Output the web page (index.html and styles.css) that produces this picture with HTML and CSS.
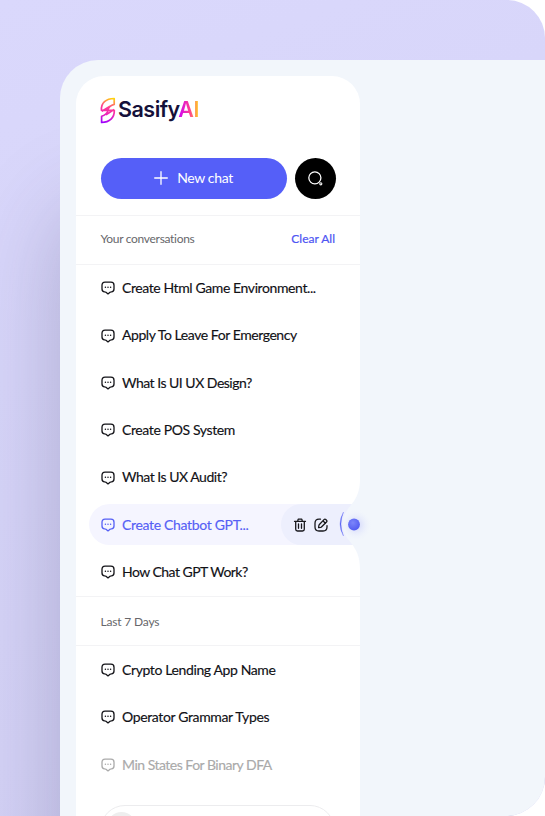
FILE: index.html
```html
<!DOCTYPE html>
<html lang="en">
<head>
<meta charset="utf-8">
<title>SasifyAI</title>
<link rel="stylesheet" href="styles.css">
</head>
<body>
<svg class="defs" width="0" height="0" aria-hidden="true">
  <symbol id="chat" viewBox="0 0 14 14">
    <path d="M4 1.200h6Q13 1.200 13 4.200v3.700q0 2.700-2.600 2.900-.8 0-1.400.5L7 12.900l-2-1.600q-.6-.5-1.400-.5Q1 10.600 1 7.900V4.200Q1 1.200 4 1.200Z" fill="none" stroke="currentColor" stroke-width="1.300" stroke-linejoin="round"/>
    <path d="M4.400 6.300h.01M7 6.300h.01M9.600 6.300h.01" stroke="currentColor" stroke-width="1.500" stroke-linecap="round"/>
  </symbol>
</svg>
<div class="stage">
  <main class="panel">
    <aside class="sidebar">
      <header class="brand">
        <svg class="mark" viewBox="0 0 16 27" fill="none">
          <defs><linearGradient id="g" x1="11" y1="0" x2="4" y2="26" gradientUnits="userSpaceOnUse"><stop offset="0" stop-color="#ffe000"/><stop offset=".4" stop-color="#ff3a94"/><stop offset=".65" stop-color="#ef25b6"/><stop offset="1" stop-color="#9b00ff"/></linearGradient></defs>
          <path d="M14.200 1.500V7.400C9.500 8.500 8.500 10.500 7.500 13.300H1.500C.8 6 6 1.500 14.200 1.500ZM1.600 25.500V19.300C6 18.200 7.200 16.200 8.300 13.300H14.300C14.600 20.800 9.500 25.500 1.600 25.500ZM1.800 14.300 10 9.200M6 17.900 14 12.500" stroke="url(#g)" stroke-width="1.700" stroke-linejoin="round"/>
        </svg>
        <span class="name">Sasify<span class="ai">AI</span></span>
      </header>
      <div class="actions">
        <button class="new"><svg viewBox="0 0 14 14"><path d="M7 .7v12.600M.7 7h12.600" stroke="#fff" stroke-width="1.300" stroke-linecap="round"/></svg><span>New chat</span></button>
        <button class="search" aria-label="Search"><svg viewBox="0 0 16 16" fill="none"><circle cx="7.400" cy="7.400" r="5.700" stroke="#fff" stroke-width="1.200"/><circle cx="13" cy="13" r="1" stroke="#fff" stroke-width="1"/></svg></button>
      </div>
      <div class="heading"><span class="l1">Your conversations</span><a class="clear">Clear All</a></div>
      <ul class="list">
        <li><svg><use href="#chat"/></svg><span class="t1">Create Html Game Environment...</span></li>
        <li><svg><use href="#chat"/></svg><span class="t2">Apply To Leave For Emergency</span></li>
        <li><svg><use href="#chat"/></svg><span class="t3">What Is UI UX Design?</span></li>
        <li><svg><use href="#chat"/></svg><span class="t4">Create POS System</span></li>
        <li><svg><use href="#chat"/></svg><span class="t5">What Is UX Audit?</span></li>
        <li class="active"><svg><use href="#chat"/></svg><span class="t6">Create Chatbot GPT...</span>
          <div class="tools">
            <svg viewBox="0 0 14 14" fill="none" stroke="#17171c" stroke-width="1.300" stroke-linecap="round" stroke-linejoin="round"><path d="M1.500 3.300h11M4.700 3.100l.5-1.900h3.600l.5 1.900M2.700 3.500v7.700q0 1.800 1.800 1.800h5q1.800 0 1.800-1.800V3.500M5.500 6v4.300M8.500 6v4.300"/></svg>
            <svg viewBox="0 0 14 14" fill="none" stroke="#17171c" stroke-width="1.300" stroke-linecap="round" stroke-linejoin="round"><path d="M6.500 1.200H5Q1 1.200 1 5.200V9q0 4 4 4h4q4 0 4-4V7.600M10 1.600q.9-.9 1.900 0l.6.6q.9.900 0 1.800L7.700 8.800q-.4.400-1 .5l-2.100.3.300-2.100q.1-.600.500-1ZM8.900 2.700l2.500 2.500"/></svg>
          </div>
          <svg class="notch" viewBox="0 0 50 100" fill="none">
            <defs><radialGradient id="ball" cx=".4" cy=".35" r=".7"><stop stop-color="#7c85fa"/><stop offset="1" stop-color="#505af0"/></radialGradient><radialGradient id="glow"><stop offset=".3" stop-color="#dfe3fb"/><stop offset="1" stop-color="#f2f6fc" stop-opacity="0"/></radialGradient></defs>
            <path d="M30 5C30 32 13 31 13 50S30 68 30 95Z" fill="#f2f6fc"/>
            <circle cx="26" cy="51" r="16" fill="url(#glow)"/>
            <path d="M13.500 38Q6.500 50 13.500 62Q8.500 50 13.500 38Z" fill="#5964f4" stroke="#5964f4" stroke-width=".3"/>
            <circle cx="24" cy="50.500" r="5.900" fill="url(#ball)"/>
          </svg>
        </li>
        <li><svg><use href="#chat"/></svg><span class="t7">How Chat GPT Work?</span></li>
      </ul>
      <div class="heading second"><span class="l2">Last 7 Days</span></div>
      <ul class="list">
        <li><svg><use href="#chat"/></svg><span class="t8">Crypto Lending App Name</span></li>
        <li><svg><use href="#chat"/></svg><span class="t9">Operator Grammar Types</span></li>
        <li class="faded"><svg><use href="#chat"/></svg><span class="t10">Min States For Binary DFA</span></li>
      </ul>
      <div class="profile"><i></i></div>
    </aside>
  </main>
</div>
</body>
</html>
```
FILE: styles.css
```css
* { box-sizing: border-box; }
html, body { margin: 0; height: 816px; overflow: hidden; background: #fff; }
body { font-family: Lato, "Liberation Sans", sans-serif; color: #111116; }
.defs { display: block; height: 0; width: 0; }
.stage { width: 545px; height: 816px; padding: 60px 0 0 60px; overflow: hidden; border-radius: 0 38px 39px 0; background: linear-gradient(160deg, #dad8fc, #d2d0f4); }
.panel { height: 756px; padding: 16px 0 0 16px; border-radius: 38px 0 0 0; background: #f2f6fb; box-shadow: 0 150px 90px 0 rgba(60, 55, 100, .27); }
.sidebar { width: 284px; height: 740px; background: #fff; border-radius: 28px 28px 0 0; }
.brand { display: flex; height: 81.500px; padding: 21px 0 0 24px; gap: 2px; }
.mark { width: 16px; height: 27px; }
.name { font: 600 21.500px/25px Inter, sans-serif; color: #15113a; letter-spacing: -.5px; }
.ai { color: transparent; background: linear-gradient(90deg, #c800ff, #ff3c93 55%, #ffd51a); background-clip: text; }
.actions { display: flex; gap: 8px; height: 57px; padding-left: 24.500px; }
button { display: flex; align-items: center; justify-content: center; border: 0; padding: 0; height: 41px; color: #fff; font-family: inherit; }
.new { width: 186px; border-radius: 21px; gap: 9px; background: #555ff8; font-size: 14px; letter-spacing: -.35px; }
.new svg { width: 14px; height: 14px; }
.new span { position: relative; top: -1px; }
.search { width: 41px; border-radius: 50%; background: #000; }
.search svg { width: 17px; height: 17px; }
.heading { display: flex; justify-content: space-between; align-items: center; height: 50px; padding: 0 25px 2px 24.500px; border-top: 1.500px solid #f3f3f5; border-bottom: 1.500px solid #f3f3f5; font-size: 12px; color: #67676b; }
.second { margin-top: .5px; padding-bottom: 0; }
.clear { color: #4e55f3; -webkit-text-stroke: .2px currentColor; }
.list { list-style: none; margin: 0; padding: 0; }
.list li { display: flex; align-items: center; height: 47.350px; padding-left: 24.500px; font-size: 14px; white-space: nowrap; position: relative; }
.list li > svg:first-child { width: 14px; height: 14px; margin-right: 7.500px; flex: none; }
.list li > span { padding-bottom: 1.500px; -webkit-text-stroke: .15px currentColor; }
.list .active { height: 41px; margin: 3.200px 0 3.150px 13px; width: 271px; padding-left: 11.500px; border-radius: 21px 0 0 21px; color: #555ff5; background: #f5f5ff; }
.tools { display: flex; align-items: center; gap: 7.500px; width: 79px; height: 41px; margin-left: auto; padding-left: 11.500px; border-radius: 21px 0 0 21px; background: #edeffd; }
.tools svg { width: 14px; height: 14px; }
.notch { position: absolute; left: 241px; top: -30px; width: 50px; height: 100px; }
.list .faded { color: #aaa; }
.profile { width: 235px; height: 50px; margin: 17px 0 0 24px; border: 1px solid #ececee; border-radius: 25px; padding: 6px; }
.profile i { display: block; width: 29px; height: 29px; border-radius: 50%; background: #eee; }
.l1 { letter-spacing: -.31px; }
.l2 { letter-spacing: -.18px; }
.t1 { letter-spacing: -.4px; }
.t2 { letter-spacing: -.44px; }
.t3 { letter-spacing: -.5px; }
.t4 { letter-spacing: -.38px; }
.t5 { letter-spacing: -.48px; }
.t6 { letter-spacing: -.33px; }
.t7 { letter-spacing: -.53px; }
.t8 { letter-spacing: -.38px; }
.t9 { letter-spacing: -.36px; }
.t10 { letter-spacing: -.5px; }
```
